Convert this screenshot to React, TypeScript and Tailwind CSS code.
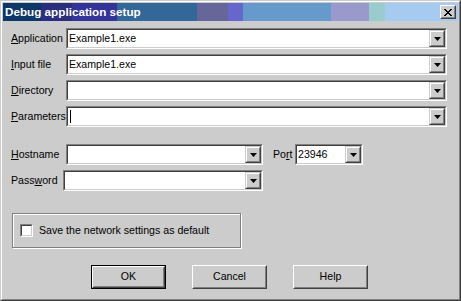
import React from "react";

const Arrow = () => (
  <svg width="7" height="4" viewBox="0 0 7 4">
    <path d="M0 0H7L3.5 4Z" fill="#000" />
  </svg>
);

const DropBtn = () => (
  <div className="flex w-[16px] h-full border border-t-[#cccccc] border-l-[#cccccc] border-b-[#404040] border-r-[#404040] bg-[#cccccc]">
    <div className="flex flex-1 items-center justify-center border border-t-white border-l-white border-b-[#808080] border-r-[#808080]">
      <Arrow />
    </div>
  </div>
);

function Combo({ w, text, cursor }: { w: string; text?: string; cursor?: boolean }) {
  return (
    <div className={`flex h-[21px] border border-t-[#808080] border-l-[#808080] border-b-white border-r-white ${w}`}>
      <div className="flex flex-1 border border-t-[#404040] border-l-[#404040] border-b-[#cccccc] border-r-[#cccccc] bg-white">
        <div className="flex flex-1 items-center pl-[1px] whitespace-nowrap overflow-hidden">
          {cursor ? <div className="w-[1px] h-[13px] bg-black ml-[1px]" /> : text}
        </div>
        <DropBtn />
      </div>
    </div>
  );
}

const Btn = ({ label, def }: { label: string; def?: boolean }) => {
  const inner = (
    <div className="flex flex-1 border border-t-white border-l-white border-b-[#404040] border-r-[#404040]">
      <div className="flex flex-1 items-center justify-center border border-t-[#cccccc] border-l-[#cccccc] border-b-[#808080] border-r-[#808080]">
        {label}
      </div>
    </div>
  );
  return def ? (
    <div className="flex w-[75px] h-[24px] border border-black">{inner}</div>
  ) : (
    <div className="flex w-[75px] h-[24px]">{inner}</div>
  );
};

export default function App() {
  return (
    <div className="w-[461px] h-[301px] bg-[#cccccc] font-['Liberation_Sans',Arial,sans-serif] text-[10.6px] text-black">
      <div className="flex flex-col w-full h-full border border-t-[#cccccc] border-l-[#cccccc] border-b-[#404040] border-r-[#404040]">
        <div className="flex flex-col flex-1 border border-t-white border-l-white border-b-[#808080] border-r-[#808080] p-[1px]">
          {/* Title bar */}
          <div className="flex items-center h-[18px] pl-[2px] pr-[2px] bg-[linear-gradient(to_right,#0d3768_0_38px,#2b2e7e_38px_69px,#333399_69px_114px,#336699_114px_194px,#666699_194px_225px,#6666cc_225px_240px,#6699cc_240px_328px,#9999cc_328px_366px,#99cccc_366px_382px,#a6caf0_382px)]">
            <span className="flex-1 text-white font-bold text-[11.7px] whitespace-nowrap">Debug application setup</span>
            <div className="flex w-[16px] h-[14px] border border-t-white border-l-white border-b-[#404040] border-r-[#404040] bg-[#cccccc]">
              <div className="flex flex-1 items-center justify-center border border-t-[#cccccc] border-l-[#cccccc] border-b-[#808080] border-r-[#808080]">
                <svg width="8" height="7" viewBox="0 0 8 7">
                  <path d="M0 0L7 7M1 0L8 7M7 0L0 7M8 0L1 7" stroke="#000" strokeWidth="1" />
                </svg>
              </div>
            </div>
          </div>
          {/* Body */}
          <div className="flex flex-col flex-1 pl-[8px] pr-[11px] pt-[7px]">
            <div className="flex flex-col gap-[5px]">
              <div className="flex items-center">
                <span className="w-[55px]"><u>A</u>pplication</span>
                <Combo w="flex-1" text="Example1.exe" />
              </div>
              <div className="flex items-center">
                <span className="w-[55px]"><u>I</u>nput file</span>
                <Combo w="flex-1" text="Example1.exe" />
              </div>
              <div className="flex items-center">
                <span className="w-[55px]"><u>D</u>irectory</span>
                <Combo w="flex-1" />
              </div>
              <div className="flex items-center">
                <span className="w-[55px]"><u>P</u>arameters</span>
                <Combo w="flex-1" cursor />
              </div>
            </div>
            <div className="flex items-center mt-[17px]">
              <span className="w-[55px]"><u>H</u>ostname</span>
              <Combo w="w-[197px]" />
              <span className="ml-[10px] w-[22px]">Po<u>r</u>t</span>
              <Combo w="w-[68px]" text="23946" />
            </div>
            <div className="flex items-center mt-[5px]">
              <span className="w-[52px]">Pass<u>w</u>ord</span>
              <Combo w="w-[200px]" />
            </div>
            <div className="flex items-center ml-[1px] mt-[22px] w-[229px] h-[35px] border border-[#808080] shadow-[inset_1px_1px_0_#fff,1px_1px_0_#fff] pl-[7px]">
              <div className="w-[13px] h-[13px] border border-t-[#808080] border-l-[#808080] border-b-white border-r-white">
                <div className="w-full h-full bg-white border border-t-[#404040] border-l-[#404040] border-b-[#cccccc] border-r-[#cccccc]" />
              </div>
              <span className="ml-[6px] whitespace-nowrap">Save the network settings as default</span>
            </div>
            <div className="flex mt-[17px] ml-[80px] gap-[26px]">
              <Btn label="OK" def />
              <Btn label="Cancel" />
              <Btn label="Help" />
            </div>
          </div>
        </div>
      </div>
    </div>
  );
}
